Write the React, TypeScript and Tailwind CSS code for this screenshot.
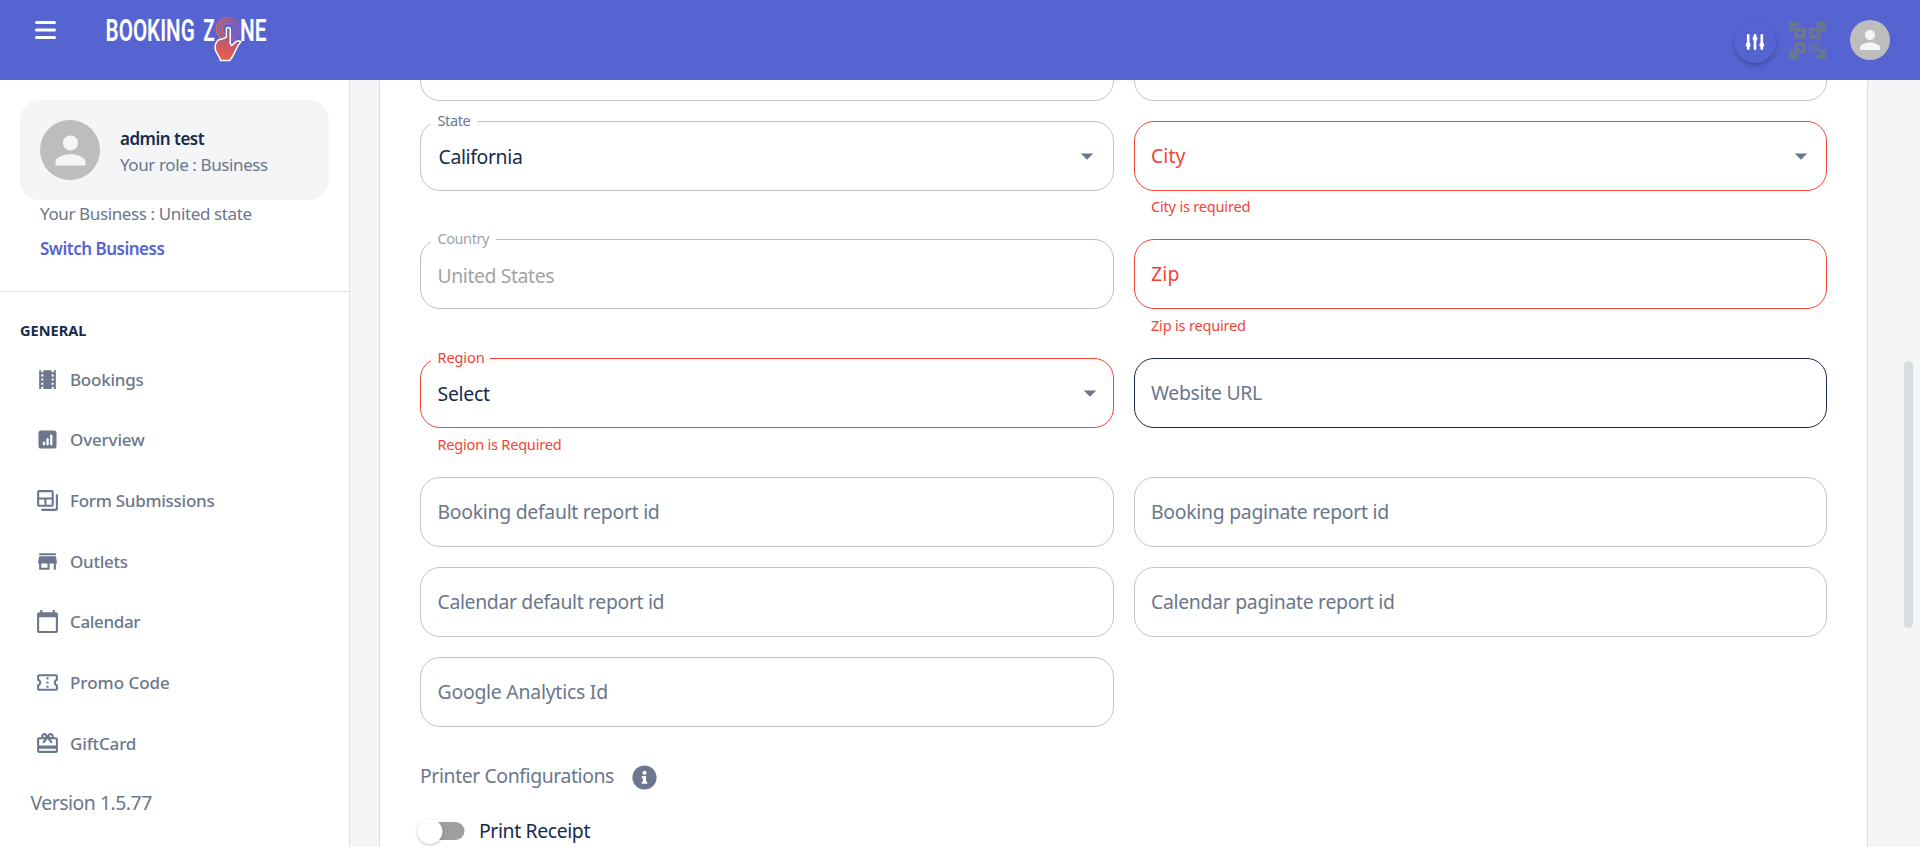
import React from "react";
import {
  MdArrowDropDown,
  MdBackupTable,
  MdCalendarToday,
  MdOutlineConfirmationNumber,
  MdPerson,
  MdRedeem,
  MdStore,
  MdTheaters,
} from "react-icons/md";
import { FaInfoCircle } from "react-icons/fa";

type Tone = "default" | "error" | "focus" | "disabled";

const borderTone: Record<Tone, string> = {
  default: "border-[#c4c4c4]",
  error: "border-[#f44336]",
  focus: "border-[#172b4d]",
  disabled: "border-[#bdbdbd]",
};

const labelTone: Record<Tone, string> = {
  default: "text-[#6b778c]",
  error: "text-[#f44336]",
  focus: "text-[#6b778c]",
  disabled: "text-[#a3a3a3]",
};

interface FieldProps {
  tone?: Tone;
  placeholder?: string;
  placeholderClass?: string;
  label?: string;
  labelClass?: string;
  value?: string;
  valueClass?: string;
  arrowClass?: string;
  helper?: string;
  helperClass?: string;
}

function Field({
  tone = "default",
  placeholder,
  placeholderClass = "",
  label,
  labelClass = "",
  value,
  valueClass = "pt-[2px]",
  arrowClass,
  helper,
  helperClass = "",
}: FieldProps) {
  return (
    <div className="min-w-0 flex-1">
      <div className={`relative flex h-[70px] items-center rounded-[20px] border pl-[16.5px] ${borderTone[tone]}`}>
        {label && (
          <span
            className={`absolute -top-[13px] left-[10px] h-6 bg-white pl-[6.5px] text-[14.55px] leading-[23px] whitespace-nowrap ${labelTone[tone]} ${labelClass}`}
          >
            {label}
          </span>
        )}
        {placeholder && (
          <span className={`text-[19.4px] leading-[30px] whitespace-nowrap ${labelTone[tone]} ${placeholderClass}`}>
            {placeholder}
          </span>
        )}
        {value && <span className={`text-[19.4px] leading-[30px] whitespace-nowrap ${valueClass}`}>{value}</span>}
        {arrowClass && <MdArrowDropDown className={`ml-auto size-[30px] text-[#6b778c] ${arrowClass}`} />}
      </div>
      {helper && (
        <p className={`pl-[17.5px] text-[14.55px] leading-[23px] whitespace-nowrap text-[#f44336] ${helperClass}`}>
          {helper}
        </p>
      )}
    </div>
  );
}

function ChartIcon({ className }: { className?: string }) {
  return (
    <svg viewBox="0 0 25 25" className={className} fill="none">
      <rect x="3.5" y="3.5" width="18" height="18" rx="2.6" fill="currentColor" />
      <path d="M9 15.6v1.7M12.6 12.2v5.1M16.3 8.6v8.7" stroke="#fff" strokeWidth="2.3" strokeLinecap="round" />
    </svg>
  );
}

function QrIcon() {
  return (
    <svg viewBox="0 0 37 37" className="size-[37px]" fill="none" stroke="#6b778c">
      <path strokeWidth="4.6" d="M2.3 9.3V2.3H9.3M27.7 2.3H34.7V9.3M34.7 27.7V34.7H27.7M9.3 34.7H2.3V27.7" />
      <path strokeWidth="3.6" d="M7.4 7.2h7.7v7.7H7.4zM22.1 7.2h7.7v7.7h-7.7zM7.4 22.1h7.7v7.7H7.4z" />
      <g fill="#6b778c" stroke="none">
        <path d="M22.8 20.6h2.6v2.6h-2.6zM28 20.6h2.4v2.6H28zM20.4 23.2h2.4v2.5h-2.4zM25.4 23.2H28v2.5h-2.6zM30.4 23.2h1.5v2.5h-1.5zM22.8 25.7h2.6v2.6h-2.6zM28 25.7h2.4v2.6H28zM20.4 28.3h2.4v2.4h-2.4zM25.4 28.3H28v2.9h-2.6zM30.4 28.3h1.5v2.4h-1.5z" />
      </g>
    </svg>
  );
}

function Logo() {
  return (
    <svg viewBox="0 0 170 60" className="h-[60px] w-[170px]">
      <defs>
        <linearGradient id="rings" x1="0" y1="0" x2="1" y2="0">
          <stop offset="0" stopColor="#ee6149" />
          <stop offset="0.55" stopColor="#c25c78" />
          <stop offset="1" stopColor="#8a5bb0" />
        </linearGradient>
        <linearGradient id="hand" x1="0.3" y1="1" x2="0.6" y2="0">
          <stop offset="0" stopColor="#ee5c43" />
          <stop offset="0.55" stopColor="#bd5a70" />
          <stop offset="1" stopColor="#6a55b0" />
        </linearGradient>
      </defs>
      <g fill="#fff" fontFamily="Roboto" fontWeight="600" fontSize="31.5">
        <text transform="translate(5.6 36) scale(0.655 1)">BOOKING</text>
        <text transform="translate(103.3 36) scale(0.6 1)">Z</text>
        <text transform="translate(140 36) scale(0.66 1)">NE</text>
      </g>
      <g fill="none" stroke="url(#rings)" strokeWidth="1.6">
        <circle cx="128" cy="24" r="11.5" />
        <circle cx="128" cy="24" r="8.8" />
        <circle cx="128" cy="24" r="6" />
      </g>
      <path
        d="M126.4 24.5c0-2.6 3.8-2.6 3.8 0v14.2l1.6 1.8 3.8-3.6c1.6-1.2 4.4-1.2 5.2-.2-3 3.2-4.4 6.8-5.8 10.1-1.3 3-2.9 5.8-5.3 8.6h-9.2c-.4-4-5-7.6-5.4-11.8-.2-4 1.4-7 3.2-8.6 1.8-1 3.3-.5 4.5-1.3 1.6-.8 2.4-.3 3.6-1.6z"
        fill="url(#hand)"
        stroke="#fff"
        strokeWidth="1.5"
        strokeLinejoin="round"
      />
    </svg>
  );
}

const menu = [
  { label: "Bookings", Icon: MdTheaters, track: "tracking-[-0.25px]" },
  { label: "Overview", Icon: ChartIcon, track: "tracking-[-0.16px]" },
  { label: "Form Submissions", Icon: MdBackupTable, track: "tracking-[-0.27px]" },
  { label: "Outlets", Icon: MdStore, track: "tracking-[-0.25px]" },
  { label: "Calendar", Icon: MdCalendarToday, track: "tracking-[-0.35px]" },
  { label: "Promo Code", Icon: MdOutlineConfirmationNumber, track: "tracking-[-0.02px]" },
  { label: "GiftCard", Icon: MdRedeem, track: "tracking-[-0.15px]" },
];

function Header() {
  return (
    <header className="relative z-10 flex h-20 shrink-0 bg-[#5664d2]">
      <button className="mt-[18px] ml-[32.5px] h-6 w-[25px]" aria-label="Menu">
        <svg viewBox="0 0 25 24" className="h-6 w-[25px]" stroke="#fff" strokeWidth="3" strokeLinecap="round">
          <path d="M3.5 4.5h18M3.5 12h18M3.5 19.5h18" />
        </svg>
      </button>
      <div className="mt-[5px] ml-[42.5px]">
        <Logo />
      </div>
      <div className="ml-auto flex items-center pr-[30px]">
        <button
          className="mt-[3px] flex size-[42px] items-center justify-center rounded-full bg-[#5664d2] shadow-[0_3px_5px_rgba(0,0,0,0.18),0_1px_3px_rgba(0,0,0,0.1)]"
          aria-label="Settings"
        >
          <svg viewBox="0 0 20 18" className="h-[18px] w-5" stroke="#fff" strokeWidth="2.6" strokeLinecap="round">
            <path d="M3.2 2.3v13.4M10 2.3v13.4M16.8 2.3v13.4" />
            <g fill="#fff" stroke="none">
              <circle cx="3.2" cy="12" r="2.4" />
              <circle cx="10" cy="5.6" r="2.4" />
              <circle cx="16.8" cy="12" r="2.4" />
            </g>
          </svg>
        </button>
        <div className="ml-[13px]">
          <QrIcon />
        </div>
        <div className="ml-6 flex size-10 items-center justify-center rounded-full bg-[#bdbdbd]">
          <MdPerson className="size-[30px] text-[#f4f5f7]" />
        </div>
      </div>
    </header>
  );
}

function Sidebar() {
  return (
    <aside className="flex w-[350px] shrink-0 flex-col border-r border-[#e0e0e0] bg-white text-[17px] whitespace-nowrap text-[#6b778c]">
      <div className="h-[212px] shrink-0 border-b border-[#e0e0e0] px-5 pt-5">
        <div className="flex h-[100px] items-center gap-5 rounded-[20px] bg-[#f4f5f7] px-5">
          <div className="flex size-[60px] items-center justify-center rounded-full bg-[#bdbdbd]">
            <MdPerson className="size-[45px] text-[#f4f5f7]" />
          </div>
          <div className="pt-[4px]">
            <div className="leading-[26px] font-semibold tracking-[-0.5px] text-[#172b4d]">admin test</div>
            <div className="leading-[26px] tracking-[-0.4px]">Your role : Business</div>
          </div>
        </div>
        <div className="pl-5">
          <div className="leading-[27px] tracking-[-0.38px]">Your Business : United state</div>
          <div className="mt-2 leading-[27px] font-semibold tracking-[-0.5px] text-[#5664d2]">Switch Business</div>
        </div>
      </div>
      <div className="mt-[26px] pl-5 text-[14.55px] leading-[24px] font-bold text-[#172b4d]">GENERAL</div>
      <nav className="mt-[7px]">
        {menu.map(({ label, Icon, track }) => (
          <a key={label} className="flex h-[60.65px] items-center gap-[10px] pl-[35px]">
            <Icon className="size-[25px]" />
            <span className={`leading-[27px] font-medium ${track}`}>{label}</span>
          </a>
        ))}
      </nav>
      <div className="mt-[14.5px] pl-[30.5px] text-[19.4px] leading-[30px] tracking-[-0.48px]">Version 1.5.77</div>
    </aside>
  );
}

function BusinessForm() {
  return (
    <div className="flex flex-col">
      <div className="-mt-[49px] flex flex-col gap-5">
        <div className="flex h-[70px] gap-5">
          <Field />
          <Field />
        </div>
        <div className="flex h-[98px] gap-5">
          <Field
            label="State"
            labelClass="w-[46px] tracking-[-0.41px]"
            value="California"
            valueClass="pt-[2px] pl-px tracking-[-0.35px] text-[#172b4d]"
            arrowClass="mr-[11px]"
          />
          <Field
            tone="error"
            placeholder="City"
            placeholderClass="tracking-[0.08px]"
            arrowClass="mr-[10px]"
            helper="City is required"
            helperClass="mt-1 tracking-[-0.2px]"
          />
        </div>
        <div className="flex h-[99px] gap-5">
          <Field
            tone="disabled"
            label="Country"
            labelClass="w-[65px] tracking-[-0.46px]"
            value="United States"
            valueClass="pt-[4px] tracking-[-0.4px] text-[#a3a3a3]"
          />
          <Field
            tone="error"
            placeholder="Zip"
            placeholderClass="tracking-[0.2px]"
            helper="Zip is required"
            helperClass="mt-[5px] tracking-[-0.2px]"
          />
        </div>
        <div className="flex h-[99px] gap-5">
          <Field
            tone="error"
            label="Region"
            labelClass="w-[59px] tracking-[-0.12px]"
            value="Select"
            valueClass="pt-[2px] tracking-[-0.25px] text-[#172b4d]"
            arrowClass="mr-2"
            helper="Region is Required"
            helperClass="mt-[5px] tracking-[-0.22px]"
          />
          <Field tone="focus" placeholder="Website URL" placeholderClass="tracking-[-0.3px]" />
        </div>
        <div className="flex h-[70px] gap-5">
          <Field placeholder="Booking default report id" placeholderClass="tracking-[-0.28px]" />
          <Field placeholder="Booking paginate report id" placeholderClass="tracking-[-0.28px]" />
        </div>
        <div className="flex h-[70px] gap-5">
          <Field placeholder="Calendar default report id" placeholderClass="tracking-[-0.34px]" />
          <Field placeholder="Calendar paginate report id" placeholderClass="tracking-[-0.3px]" />
        </div>
        <div className="flex h-[70px] gap-5">
          <Field placeholder="Google Analytics Id" placeholderClass="tracking-[-0.23px]" />
          <div className="flex-1" />
        </div>
      </div>
      <div className="mt-[34px] flex h-[30px] items-center">
        <span className="w-[211.5px] text-[19.4px] leading-[30px] tracking-[-0.4px] whitespace-nowrap text-[#6b778c]">
          Printer Configurations
        </span>
        <FaInfoCircle className="mt-[2px] size-[25px] text-[#6b778c]" />
      </div>
      <div className="mt-[25px] flex h-[30px] items-center">
        <div className="flex h-[17.5px] w-[42.5px] translate-x-[1.5px] items-center rounded-full bg-[#9e9e9e]">
          <span className="-ml-[4px] size-[25px] shrink-0 rounded-full bg-white shadow-[0_1px_3px_rgba(0,0,0,0.25)]" />
        </div>
        <span className="ml-[16.5px] text-[19.4px] leading-[30px] tracking-[-0.38px] text-[#172b4d]">Print Receipt</span>
      </div>
    </div>
  );
}

export default function App() {
  return (
    <div className="flex h-[847px] flex-col overflow-hidden bg-[#f4f5f7] font-['Noto_Sans',sans-serif]">
      <Header />
      <div className="flex min-h-0 flex-1">
        <Sidebar />
        <main className="flex min-w-0 flex-1 overflow-hidden">
          <section className="ml-[30px] w-[1487px] shrink-0 bg-white px-10 shadow-[0_0_0_1px_rgba(63,63,68,0.08),0_1px_2px_rgba(63,63,68,0.15)]">
            <BusinessForm />
          </section>
          <div className="mt-[281px] ml-[37px] h-[267px] w-[9px] rounded-full bg-[#d6dee1]" />
        </main>
      </div>
    </div>
  );
}
